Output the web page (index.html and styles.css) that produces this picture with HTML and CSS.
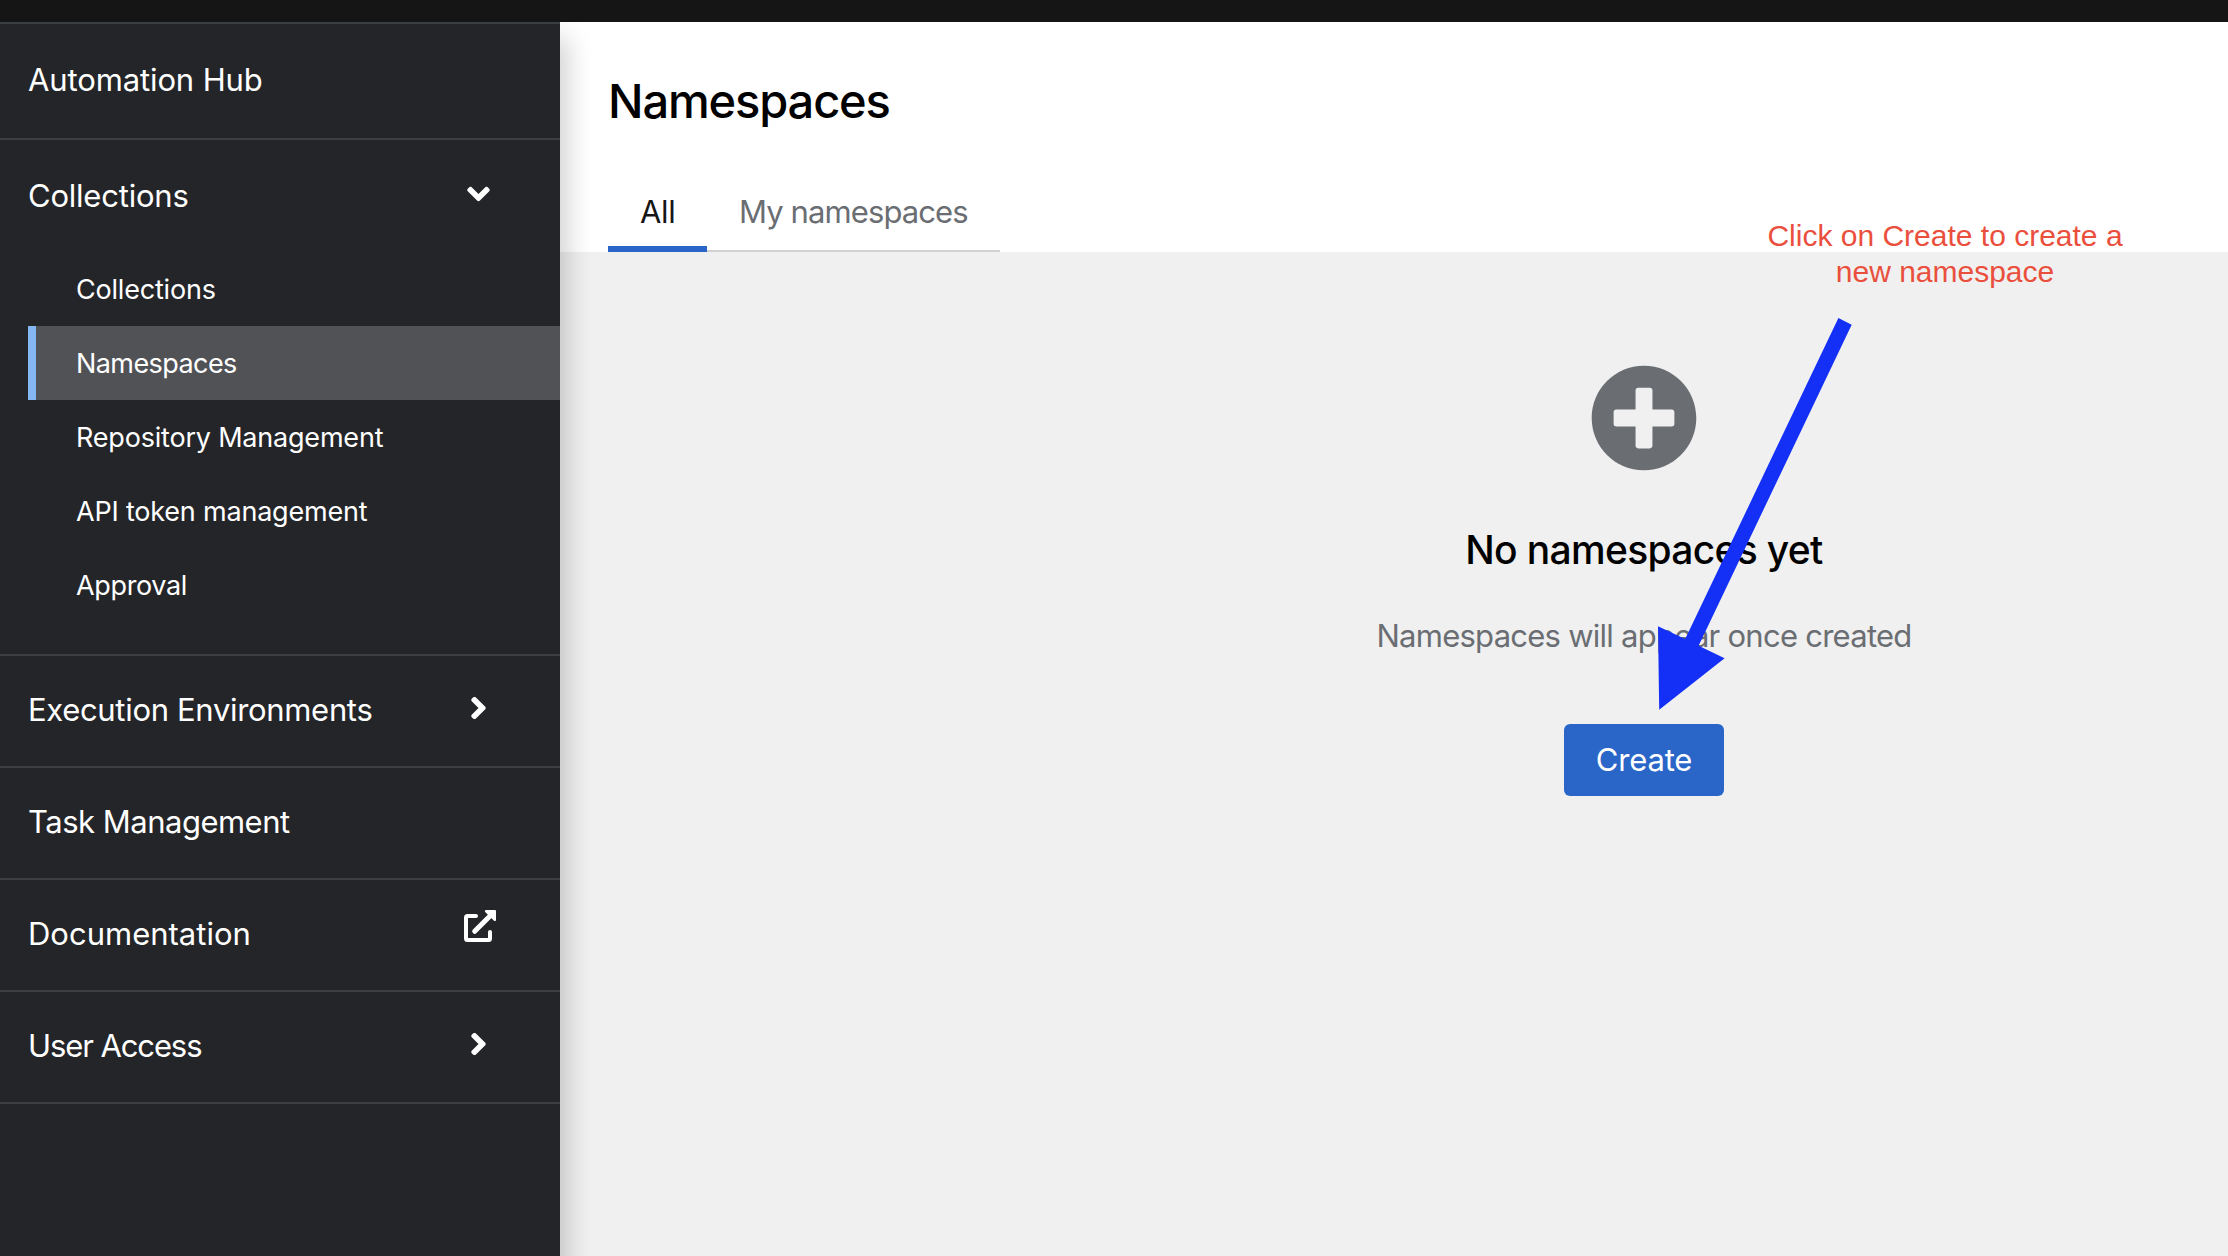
FILE: index.html
```html
<!DOCTYPE html>
<html lang="en">
<head>
<meta charset="utf-8">
<title>Automation Hub</title>
<link rel="stylesheet" href="styles.css">
</head>
<body>
<svg class="defs" aria-hidden="true">
  <symbol id="angle" viewBox="0 0 320 512"><path d="M143 352.3L7 216.3c-9.4-9.4-9.4-24.6 0-33.9l22.6-22.6c9.4-9.4 24.6-9.4 33.9 0l96.4 96.4 96.4-96.4c9.4-9.4 24.6-9.4 33.9 0l22.6 22.6c9.4 9.4 9.4 24.6 0 33.9l-136 136c-9.2 9.4-24.4 9.4-33.8 0z"/></symbol>
</svg>
<header class="masthead"></header>
<div class="page">
  <nav class="sidebar">
    <div class="nav-title"><span class="t-hub">Automation Hub</span></div>
    <section class="nav-group">
      <a class="nav-item nav-item-open"><span class="t-collections">Collections</span><svg class="angle"><use href="#angle"/></svg></a>
      <ul class="subnav">
        <li class="t-sub">Collections</li>
        <li class="current t-sub-namespaces">Namespaces</li>
        <li class="t-sub">Repository Management</li>
        <li class="t-sub">API token management</li>
        <li class="t-sub-approval">Approval</li>
      </ul>
    </section>
    <a class="nav-item"><span class="t-execution">Execution Environments</span><svg class="angle angle-right"><use href="#angle"/></svg></a>
    <a class="nav-item"><span class="t-task">Task Management</span></a>
    <a class="nav-item"><span>Documentation</span>
      <svg class="external" viewBox="0 0 32 32"><path d="M12 6H3.500A1.500 1.500 0 0 0 2 7.500V28.500A1.500 1.500 0 0 0 3.500 30H24.500A1.500 1.500 0 0 0 26 28.500V22" fill="none" stroke="currentColor" stroke-width="4" stroke-linecap="round"/><path d="M10.700 21.300L26 6" stroke="currentColor" stroke-width="5" stroke-linecap="round"/><path d="M22 0H31a1 1 0 0 1 1 1V10a1.200 1.200 0 0 1-2 .8L21.200 2A1.200 1.200 0 0 1 22 0z"/></svg></a>
    <a class="nav-item"><span class="t-user">User Access</span><svg class="angle angle-right"><use href="#angle"/></svg></a>
  </nav>
  <main class="main">
    <div class="content">
      <div class="page-header">
        <h1>Namespaces</h1>
        <div class="tabs">
          <button class="tab active">All</button>
          <button class="tab">My namespaces</button>
        </div>
      </div>
      <div class="empty">
        <svg class="plus" viewBox="0 0 512 512"><path d="M256 8C119 8 8 119 8 256s111 248 248 248 248-111 248-248S393 8 256 8zm144 276c0 6.600-5.400 12-12 12h-92v92c0 6.600-5.400 12-12 12h-56c-6.600 0-12-5.400-12-12v-92h-92c-6.600 0-12-5.400-12-12v-56c0-6.600 5.400-12 12-12h92v-92c0-6.600 5.400-12 12-12h56c6.600 0 12 5.400 12 12v92h92c6.600 0 12 5.400 12 12v56z"/></svg>
        <h2>No namespaces yet</h2>
        <p>Namespaces will appear once created</p>
        <button class="create">Create</button>
      </div>
    </div>
  </main>
</div>
<svg class="arrow" viewBox="1650 310 210 405"><path d="M1838.400 318L1851.700 324.700L1698.600 645.700L1724.600 658.300L1659.200 709.700L1658 626.300L1685.200 639z"/></svg>
<div class="note">Click on Create to create a<br>new namespace</div>
</body>
</html>
```
FILE: styles.css
```css
* { box-sizing: border-box; }

body {
  margin: 0;
  height: 1256px;
  display: flex;
  flex-direction: column;
  overflow: hidden;
  font-family: Inter, sans-serif;
  font-size: 31px;
  color: #151515;
}

h1, h2, p, ul { margin: 0; padding: 0; font-weight: 400; }
button { font: inherit; border: 0; background: none; padding: 0; white-space: nowrap; }
svg { fill: currentColor; flex: none; }
.defs { display: none; }

.masthead { height: 22px; background: #151515; flex: none; }

.page { flex: 1; display: flex; min-height: 0; overflow: hidden; }

/* Sidebar runs past the bottom edge so its shadow stays even */
.sidebar {
  width: 560px;
  flex: none;
  margin-bottom: -48px;
  z-index: 1;
  background: #242529;
  color: #fff;
  border-top: 2px solid #3c3f42;
  box-shadow: 24px 0 24px -16px rgba(3, 3, 3, .18);
}

.nav-title, .nav-item {
  display: flex;
  align-items: center;
  justify-content: space-between;
  padding: 0 70px 4px 28px;
  white-space: nowrap;
}
.nav-title { height: 116px; border-bottom: 2px solid #3c3f42; padding-bottom: 3px; }
.nav-item { height: 112px; border-bottom: 2px solid #3c3f42; }
.nav-item-open { border-bottom: 0; padding-bottom: 2px; }
.nav-group { border-bottom: 2px solid #3c3f42; padding-bottom: 32px; }

.angle { width: 23px; height: 36px; margin-bottom: 2px; }
.angle-right { transform: rotate(-90deg); }
.external { width: 32px; height: 32px; margin: 0 -6px 14px 0; }

.subnav { list-style: none; padding-left: 28px; font-size: 27px; }
.subnav li {
  height: 74px;
  line-height: 76px;
  padding-left: 40px;
  border-left: 8px solid transparent;
}
.subnav .current { background: #515256; border-color: #85b8f3; }

.t-hub { letter-spacing: -.12px; }
.t-collections { letter-spacing: -.22px; }
.t-execution { letter-spacing: -.32px; }
.t-task { letter-spacing: -.5px; }
.t-user { letter-spacing: -1.1px; }
.t-sub { letter-spacing: -.2px; }
.t-sub-namespaces { letter-spacing: -.58px; }
.t-sub-approval { letter-spacing: -.35px; }

/* Content is wider than the window and runs past its right edge */
.main { flex: 1; min-width: 0; overflow: hidden; background: #f0f0f0; }
.content { width: 2168px; }

.page-header { height: 230px; padding: 48px 48px 0; background: #fff; }
.page-header h1 {
  font-size: 47px;
  font-weight: 500;
  line-height: 62px;
  letter-spacing: -1.14px;
  color: #000;
  margin-bottom: 40px;
}
.tabs { display: flex; }
.tab {
  height: 80px;
  width: 293px;
  padding: 0 0 2px 32px;
  text-align: left;
  color: #6a6e73;
  letter-spacing: -.9px;
  box-shadow: inset 0 -2px #d2d2d2;
}
.tab.active {
  width: 99px;
  color: #151515;
  letter-spacing: -.3px;
  box-shadow: inset 0 -6px #2a65c8;
}

.empty {
  display: flex;
  flex-direction: column;
  align-items: center;
  padding-top: 112px;
  color: #6a6e73;
}
.plus { width: 108px; height: 108px; }
.empty h2 {
  margin-top: 51px;
  font-size: 39px;
  font-weight: 500;
  line-height: 53px;
  letter-spacing: -.68px;
  color: #000;
}
.empty p { margin-top: 35px; line-height: 49px; letter-spacing: -.74px; }
.create {
  margin-top: 64px;
  width: 160px;
  height: 72px;
  padding-bottom: 2px;
  border-radius: 6px;
  background: #2a65c8;
  color: #fff;
  letter-spacing: -.2px;
}

/* Annotation laid over the page */
.arrow { position: absolute; left: 1650px; top: 310px; width: 210px; height: 405px; z-index: 2; color: #1430f7; }
.note {
  position: absolute;
  left: 1745px;
  top: 218px;
  width: 400px;
  z-index: 2;
  font: 30px/36px "Liberation Sans", sans-serif;
  text-align: center;
  color: #ea4f3d;
}
```
